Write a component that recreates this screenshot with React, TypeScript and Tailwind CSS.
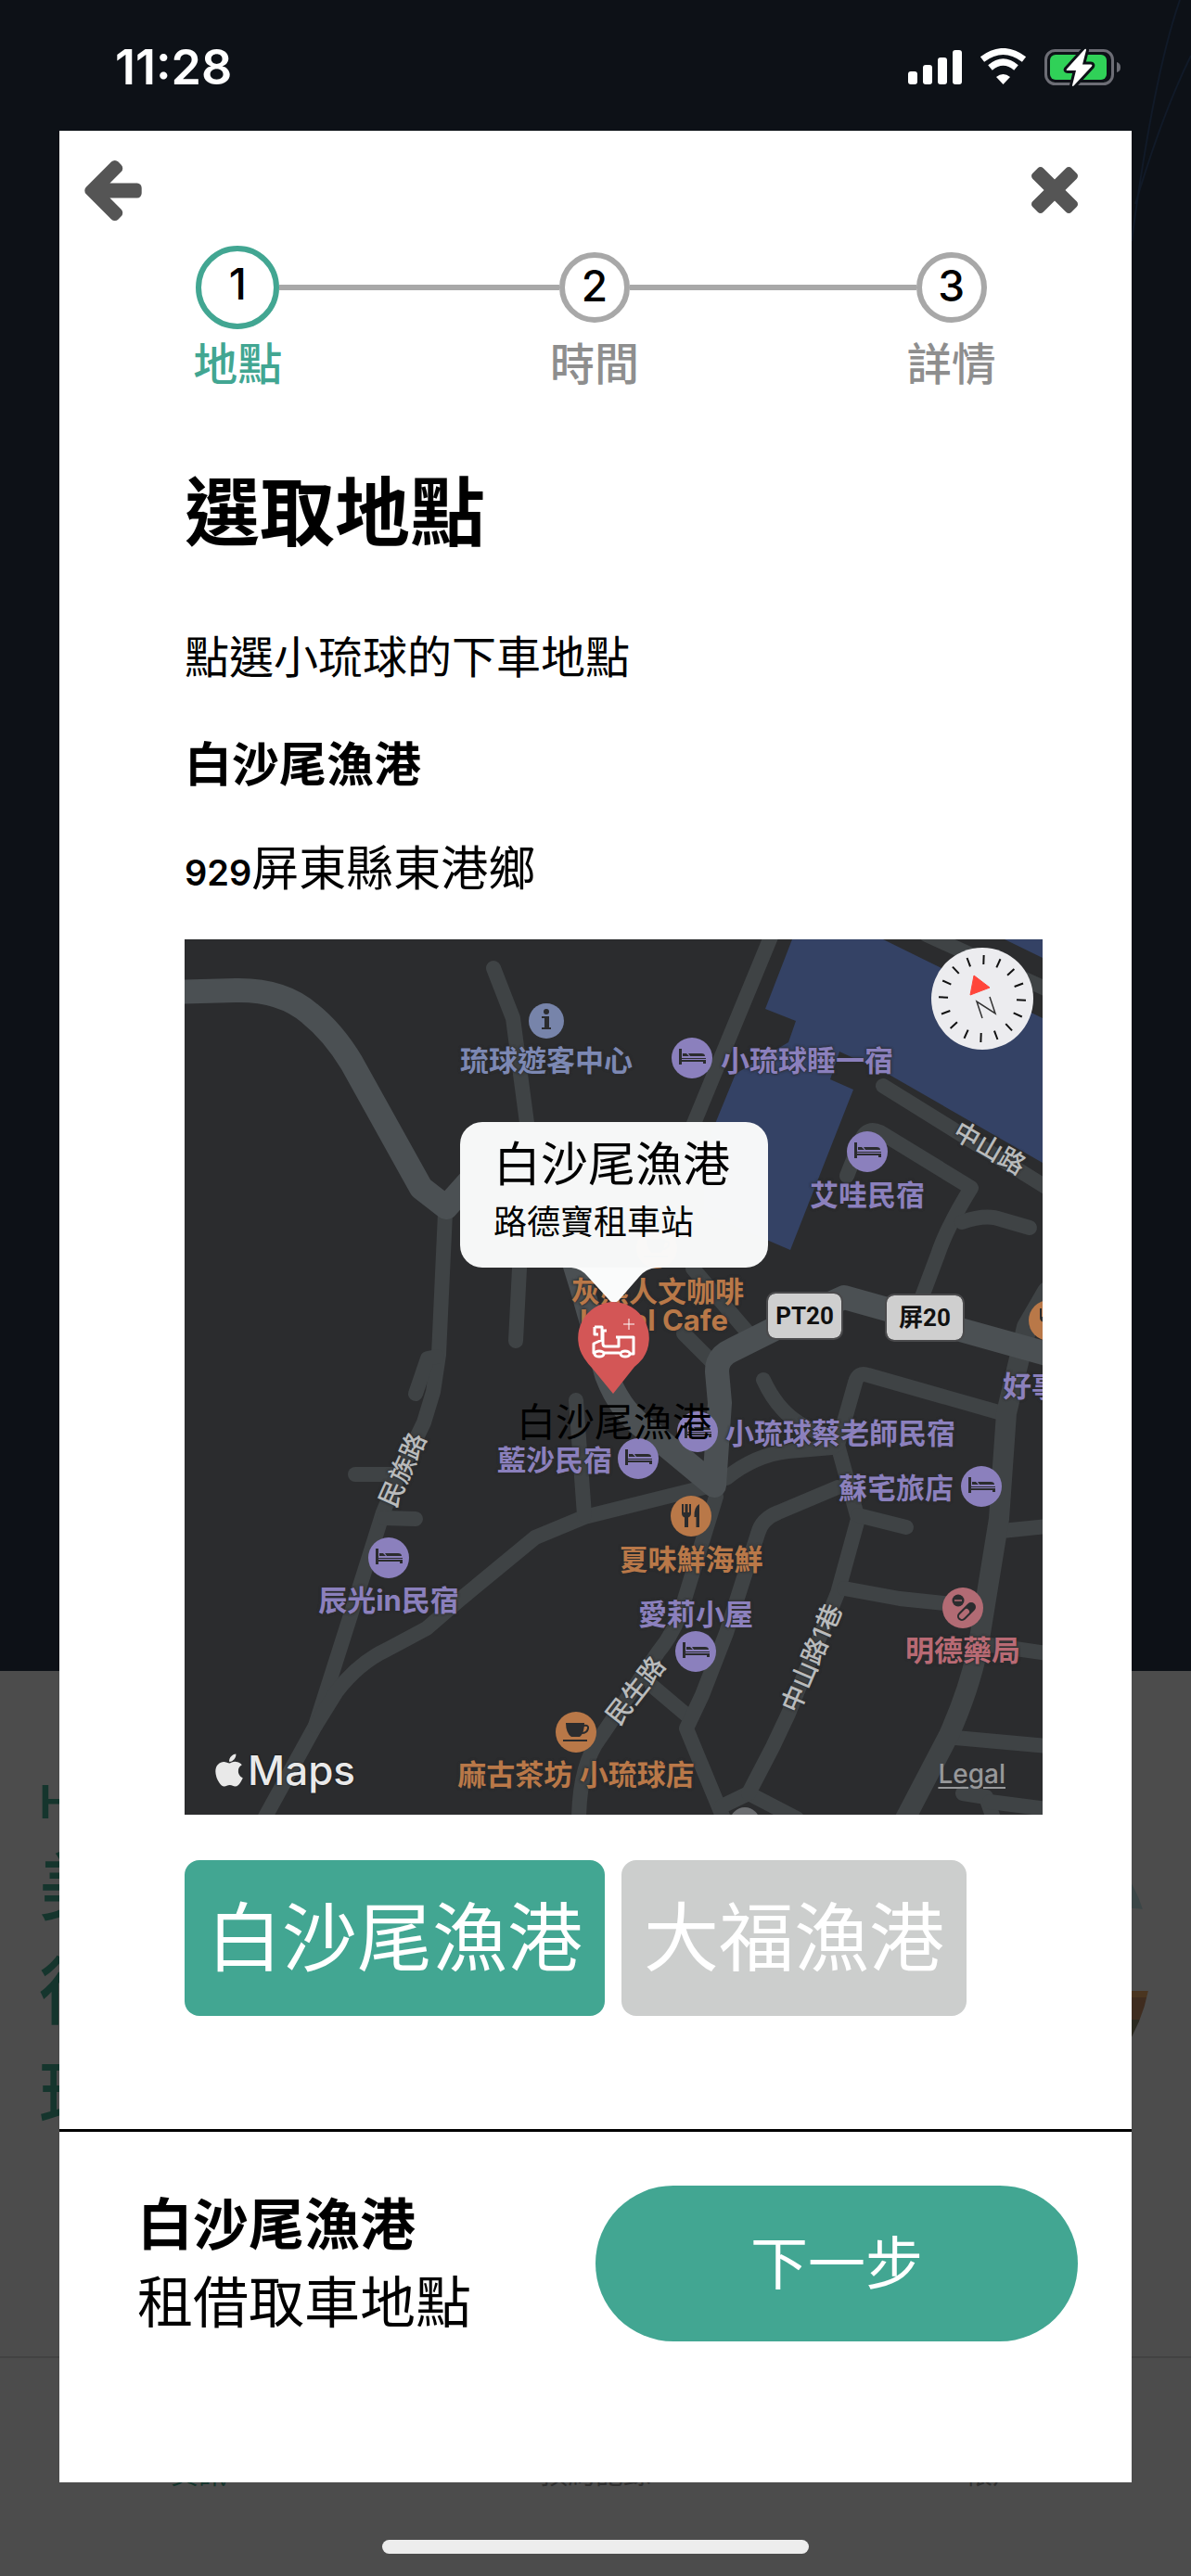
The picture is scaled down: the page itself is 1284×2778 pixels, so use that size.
import React, { FunctionComponent, useState } from 'react'
import { FaApple } from 'react-icons/fa'

type Kind = 'bed' | 'food' | 'cafe' | 'pill' | 'info'

const steps = ['地點', '時間', '詳情']
const ports = ['白沙尾漁港', '大福漁港']

const minorRoads = [
  'M333 31L354 85L369 198L361 355L357 433',
  'M281 295L274 448L268 488L258 521L232 575L214 618L191 691L141 848L86 948',
  'M272 450L262 452L249 490',
  'M184 577H230',
  'M249 625L215 624',
  'M141 848L164 811Q188 780 218 766L261 743L298 711L378 645L431 623L564 590',
  'M422 497L431 621',
  'M425 948Q426 890 448 861L511 768Q530 745 538 715L573 601',
  'M504 805L543 838',
  'M704 591L640 618Q622 625 618 641L584 748L558 815L541 851L581 948',
  'M579 935L608 921L660 948',
  'M608 921L634 871L651 835L704 705L726 625L704 545',
  'M704 545L723 478Q726 466 737 470L881 511',
  'M584 581Q615 556 651 552L698 548',
  'M624 475Q640 510 668 525L698 540',
  'M726 621L778 634',
  'M711 700L771 711L838 718',
  'M881 638L930 633',
  'M868 761L930 770',
  'M831 861L930 870',
  'M839 921L864 925L872 948',
  'M868 930L930 938',
  'M633 -5L548 201',
  'M753 158L930 268',
  'M714 255L730 215Q736 202 750 208L848 268Q822 310 812 340L794 388',
  'M838 305Q864 296 880 302L911 311',
  'M800 -5L930 54',
  'M548 355L608 425',
  'M538 425L568 455',
]

const places: { text: string; className: string }[] = [
  { text: '琉球遊客中心', className: 'left-[390px] top-[131px] text-[#7c88b3]' },
  { text: '小琉球睡一宿', className: 'left-[671px] top-[131px] text-[#8b80bd]' },
  { text: '艾哇民宿', className: 'left-[736px] top-[276px] text-[#8b80bd]' },
  { text: '灰熊人文咖啡', className: 'left-[510px] top-[380px] text-[#b97848]' },
  { text: 'Local Cafe', className: 'left-[506px] top-[411px] text-[#b97848]' },
  { text: '好事', className: 'left-[913px] top-[482px] text-[#8b80bd]' },
  { text: '小琉球蔡老師民宿', className: 'left-[707px] top-[533px] text-[#8b80bd]' },
  { text: '藍沙民宿', className: 'left-[399px] top-[562px] text-[#8b80bd]' },
  { text: '蘇宅旅店', className: 'left-[767px] top-[592px] text-[#8b80bd]' },
  { text: '夏味鮮海鮮', className: 'left-[546px] top-[669px] text-[#b97848]' },
  { text: '愛莉小屋', className: 'left-[551px] top-[728px] text-[#8b80bd]' },
  { text: '明德藥局', className: 'left-[839px] top-[767px] text-[#b96a74]' },
  { text: '辰光in民宿', className: 'left-[220px] top-[713px] text-[#8b80bd]' },
  { text: '麻古茶坊 小琉球店', className: 'left-[422px] top-[901px] text-[#b97848]' },
]

const roadNames: { text: string; className: string }[] = [
  { text: '中山路', className: 'left-[868px] top-[225px] rotate-[30deg]' },
  { text: '民族路', className: 'left-[235px] top-[572px] rotate-[-66deg]' },
  { text: '民生路', className: 'left-[486px] top-[810px] rotate-[-52deg]' },
  { text: '中山路1巷', className: 'left-[676px] top-[775px] rotate-[-67deg]' },
]

const markers: { kind: Kind; x: number; y: number }[] = [
  { kind: 'info', x: 390, y: 88 },
  { kind: 'bed', x: 547, y: 128 },
  { kind: 'bed', x: 736, y: 229 },
  { kind: 'cafe', x: 509, y: 333 },
  { kind: 'food', x: 932, y: 411 },
  { kind: 'bed', x: 553, y: 531 },
  { kind: 'bed', x: 489, y: 560 },
  { kind: 'bed', x: 859, y: 590 },
  { kind: 'food', x: 546, y: 622 },
  { kind: 'bed', x: 551, y: 768 },
  { kind: 'pill', x: 839, y: 721 },
  { kind: 'bed', x: 220, y: 667 },
  { kind: 'cafe', x: 422, y: 855 },
]

const markerFill: Record<Kind, string> = {
  bed: '#8b80bd',
  food: '#b97848',
  cafe: '#b97848',
  pill: '#b26b74',
  info: '#7784aa',
}

const Glyph: FunctionComponent<{ kind: Kind }> = ({ kind }) => {
  if (kind === 'bed') {
    return (
      <g fill="#2b2c2e">
        <path d="M-14 -10h3v10H15V6H12V4H-11V7H-14z" />
        <path d="M-10 -5h4l3 3h-7z M-4 -5H10q4 0 4 3H-2z" />
        <path d="M-11 1.5H15" stroke="#8b80bd" strokeWidth="1" />
      </g>
    )
  }
  if (kind === 'food') {
    return (
      <g fill="#2b2c2e">
        <path d="M-10 -13h2v9h1.500v-9h3v9H-2v-9H0v10q0 3 -3 4.500V12H-7V1.500Q-10 0 -10 -3z" />
        <path d="M9 -13V12H5.500V1H3.500Q3 -10 9 -13z" />
      </g>
    )
  }
  if (kind === 'cafe') {
    return (
      <g fill="#2b2c2e">
        <path d="M-11 -10H9Q9 1 4 5H-5Q-11 1 -11 -10z" />
        <path d="M8 -7q6 -1 5 3q-1 5 -7 5" fill="none" stroke="#2b2c2e" strokeWidth="2" />
        <path d="M-14 8H12v2H-14z" />
      </g>
    )
  }
  if (kind === 'pill') {
    return (
      <g>
        <circle cx="-5" cy="-8" r="6.500" fill="#2b2c2e" />
        <path d="M-9 -8h8" stroke="#b26b74" strokeWidth="1.500" />
        <path d="M-1 9L9 -1" stroke="#2b2c2e" strokeWidth="10" strokeLinecap="round" />
        <path d="M-1 9L4 4" stroke="#b26b74" strokeWidth="6" strokeLinecap="round" />
      </g>
    )
  }
  return (
    <g fill="#2b2c2e">
      <circle cy="-10" r="3" />
      <path d="M-5 -5H3V7H5V9H-5V7H-2V-3H-5z" />
    </g>
  )
}

const Compass = () => {
  const ticks = Array.from({ length: 16 }, (_, i) => i * 22.5 + 2)
  return (
    <g transform="translate(860 64)">
      <circle r="55" fill="#ececef" />
      {ticks.map((angle) => (
        <path key={angle} d="M0 -47V-37" stroke="#111" strokeWidth="2" transform={`rotate(${angle})`} />
      ))}
      <path d="M-9 -25L8 -12L-13 -4z" fill="#ff453a" stroke="#ff453a" strokeWidth="1" strokeLinejoin="round" />
      <path d="M0 21L-6 3L14 16L8 -2" fill="none" stroke="#333" strokeWidth="1.500" />
    </g>
  )
}

const Pin = () => (
  <svg className="absolute left-[423px] top-[390px] h-[102px] w-20" viewBox="0 0 80 102">
    <path d="M39 1A39 39 0 0 1 71 62Q66 68 62 71L39 100L16 72Q12 68 8 62A39 39 0 0 1 39 1z" fill="#d35656" />
    <g fill="none" stroke="#fff" strokeWidth="3" strokeLinejoin="round">
      <path d="M19 28H27V32H32 M19 28V36H23 M27 30V42L18 46V56H20 M28 32V46Q28 49 31 49H45V39 M42 39H61V57H58 M29 56H46" />
      <ellipse cx="24" cy="57" rx="5" ry="3" />
      <ellipse cx="52" cy="57" rx="5" ry="3" />
    </g>
    <path d="M56 19V31 M50 25H62" stroke="#fff" strokeWidth="1" />
  </svg>
)

const PortMap = () => (
  <section className="relative h-[944px] w-full overflow-hidden bg-[#2b2c2e]">
    <svg className="absolute left-0 top-0 h-[944px] w-[925px]" viewBox="0 0 925 944">
      <path
        d="M655 0H753L925 85V241L758 145L706 121L696 151L721 162L653 335L560 295V228L594 145L651 111L659 88L626 75z M884 0H925V20z"
        fill="#344265"
      />
      <g fill="none" stroke="#3f4345" strokeWidth="16" strokeLinecap="round" strokeLinejoin="round">
        {minorRoads.map((road) => (
          <path key={road} d={road} />
        ))}
        <path d="M930 380L908 418L886 511L878 625L858 748Q850 800 824 858L776 950" strokeWidth="22" />
      </g>
      <g fill="none" stroke="#4b5053" strokeWidth="26" strokeLinecap="round" strokeLinejoin="round">
        <path d="M-15 57L55 55Q105 54 135 80Q160 100 180 133L255 268L282 289L330 235" />
        <path d="M405 300L428 375L455 470Q470 510 500 530L571 589L577 500L574 466Q574 450 590 443L640 418L711 386L940 450" />
      </g>
      <circle cx="604" cy="952" r="16" fill="#6b6d70" />
      {markers.map((m) => (
        <g key={`${m.x}-${m.y}`} transform={`translate(${m.x} ${m.y})`}>
          <circle r={m.kind === 'info' ? 19 : 22} fill={markerFill[m.kind]} />
          <Glyph kind={m.kind} />
        </g>
      ))}
      <Compass />
    </svg>

    {places.map((place) => (
      <span
        key={place.text}
        className={`absolute -translate-x-1/2 -translate-y-1/2 whitespace-nowrap text-[31px] leading-7 font-bold [text-shadow:0_0_3px_#2b2c2e,0_0_3px_#2b2c2e] ${place.className}`}
      >
        {place.text}
      </span>
    ))}
    {roadNames.map((road) => (
      <span
        key={road.text}
        className={`absolute -translate-x-1/2 -translate-y-1/2 whitespace-nowrap text-[28px] leading-9 font-medium text-[#b9bbbc] [text-shadow:0_0_3px_#2b2c2e,0_0_3px_#2b2c2e] ${road.className}`}
      >
        {road.text}
      </span>
    ))}

    <span className="absolute left-[629px] top-[382px] flex h-12 w-[79px] items-center justify-center rounded-lg bg-[#cfcfcf] font-[Roboto,'Noto_Sans_CJK_TC',sans-serif] text-[26px] font-bold text-[#111] outline-2 outline-[#4a4a4c]">
      PT20
    </span>
    <span className="absolute left-[757px] top-[384px] flex h-12 w-[82px] items-center justify-center rounded-lg bg-[#cfcfcf] font-[Roboto,'Noto_Sans_CJK_TC',sans-serif] text-[26px] font-bold text-[#111] outline-2 outline-[#4a4a4c]">
      屏20
    </span>

    <div className="absolute left-[297px] top-[197px] h-[157px] w-[332px] rounded-3xl bg-[#fafbfb]/98 px-9 pt-[14px] text-black">
      <p className="text-[51px] leading-16">白沙尾漁港</p>
      <p className="text-4xl leading-[60px]">路德寶租車站</p>
      <svg className="absolute left-[120px] top-[157px] h-[38px] w-[92px]" viewBox="0 0 92 38">
        <path d="M0 0H92Q80 1 73 10L53 33Q46 42 39 33L18 10Q11 1 0 0z" fill="#fafbfb" />
      </svg>
    </div>
    <Pin />
    <span className="absolute left-[463px] top-[521px] -translate-x-1/2 -translate-y-1/2 whitespace-nowrap text-[42px] leading-12 text-black">
      白沙尾漁港
    </span>

    <div className="absolute bottom-5 left-7 flex items-center text-[#e9e9e9] [text-shadow:0_0_2px_#000]">
      <FaApple className="size-10" />
      <span className="text-[44px] leading-14 font-medium">Maps</span>
    </div>
    <a href="#legal" className="absolute bottom-6 right-10 text-[28px] leading-10 font-medium text-[#97989a] underline underline-offset-4">
      Legal
    </a>
  </section>
)

const StatusBar = () => (
  <header className="flex h-[141px] items-center justify-between pt-1 pl-[124px] pr-[76px] text-white">
    <span className="text-[52px] font-semibold">11:28</span>
    <svg className="h-[42px] w-[230px]" viewBox="0 0 230 42">
      <g fill="#fff">
        <rect x="1" y="25" width="10" height="14" rx="3" />
        <rect x="17" y="18" width="10" height="21" rx="3" />
        <rect x="33" y="10" width="10" height="29" rx="3" />
        <rect x="49" y="2" width="10" height="37" rx="3" />
        <path d="M103.500 39L96 31Q103.500 25 111 31z" />
      </g>
      <g fill="none" stroke="#fff" strokeWidth="7">
        <path d="M81 12Q103.500 -5 126 12" />
        <path d="M89.500 21Q103.500 9 117.500 21" />
      </g>
      <rect x="149.500" y="2.500" width="72" height="36" rx="10" fill="none" stroke="#6c6d75" strokeWidth="3" />
      <path d="M226 15q4 1 4 5.500t-4 5.500z" fill="#6c6d75" />
      <rect x="154" y="7" width="61" height="27" rx="6" fill="#30d158" />
      <path
        d="M191.500 1L172 22.500Q171 24 173 24H182L178 40Q178 42 180 40L199 19.500Q200 17.500 198 17.500H189L193 2Q193 0 191.500 1z"
        fill="#fff"
        stroke="#0d1117"
        strokeWidth="6"
        paintOrder="stroke"
      />
    </svg>
  </header>
)

// the home screen that stays visible around the dialog
const Backdrop = () => (
  <div className="flex flex-col overflow-hidden bg-[#4c4c4c] [grid-area:1/1]" aria-hidden="true">
    <div className="flex h-[1802px] justify-end bg-[#0d1117]">
      <svg className="h-[700px] w-20" viewBox="0 0 80 700" fill="none" stroke="#111a28" strokeWidth="2">
        <path d="M68 0Q40 80 16 260M80 60Q50 120 20 220" />
      </svg>
    </div>
    <div className="flex flex-1 items-start justify-between pt-[109px] pl-[42px] text-[#15352d]">
      <div className="font-medium">
        <p className="text-[50px] leading-16 font-semibold">Hello</p>
        <p className="mt-1 text-[80px] leading-28">
          美好<br />
          得來<br />
          琉球
        </p>
      </div>
      <svg className="mt-[30px] h-[346px] w-[389px]" viewBox="0 0 389 346">
        <clipPath id="scene">
          <circle cx="173" cy="173" r="173" />
        </clipPath>
        <g clipPath="url(#scene)">
          <path d="M0 0H346V119Q335 117 310 116H0z" fill="#3b4647" />
          <path d="M0 206H346V213H0z" fill="#4a3520" />
          <path d="M0 213H346V237H0z" fill="#3f2c1f" />
          <path d="M0 237H346V346H0z" fill="#2b2a20" />
        </g>
      </svg>
    </div>
    <div className="grid h-[237px] grid-cols-3 border-t-2 border-[#424242] pt-[106px] text-center text-[30px] leading-9 text-[#303030]">
      <span className="text-[#15352d]">資訊</span>
      <span>預約記錄</span>
      <span>帳戶</span>
    </div>
  </div>
)

const Stepper: FunctionComponent<{ current: number }> = ({ current }) => (
  <ol className="mt-6 mr-0.5 grid grid-cols-3">
    {steps.map((step, i) => (
      <li key={step} className="flex flex-col items-center">
        <div className="flex h-[90px] w-full items-center">
          <span className={`h-[6px] flex-1 ${i === 0 ? 'bg-white' : 'bg-[#a8a8a8]'}`} />
          <span
            className={`flex items-center justify-center rounded-full border-[6px] text-[46px] leading-none font-medium text-black ${
              i === current ? 'size-[90px] border-[#42a692] pb-2' : 'size-[76px] border-[#a8a8a8] pb-1'
            }`}
          >
            {i + 1}
          </span>
          <span className={`h-[6px] flex-1 ${i === steps.length - 1 ? 'bg-white' : 'bg-[#a8a8a8]'}`} />
        </div>
        <span className={`mt-[10px] text-5xl leading-14 font-medium ${i === current ? 'text-[#42a692]' : 'text-[#8e8e8e]'}`}>
          {step}
        </span>
      </li>
    ))}
  </ol>
)

const App: FunctionComponent = () => {
  const [port, setPort] = useState<string>(ports[0])

  return (
    <div className="grid min-h-screen font-[Inter,'Noto_Sans_CJK_TC',sans-serif]" lang="zh-Hant">
      <Backdrop />
      <div className="relative flex flex-col [grid-area:1/1]">
        <StatusBar />
        <main className="mx-16 bg-white text-black">
          <div className="flex h-25 items-center justify-between pt-7 pr-[58px] pl-[27px]">
            <button type="button" aria-label="返回">
              <svg className="h-[65px] w-[62px]" viewBox="64 181 1472 1558" fill="#555">
                <path d="M1536 896v128q0 53-32.500 90.500T1419 1152H715l293 294q38 36 38 90t-38 90l-75 76q-37 37-90 37-52 0-91-37L101 1050q-37-37-37-90 0-52 37-91l651-650q38-38 91-38 52 0 90 38l75 74q38 38 38 91t-38 91L715 768h704q52 0 84.500 37.500T1536 896z" />
              </svg>
            </button>
            <button type="button" aria-label="關閉">
              <svg className="size-[50px]" viewBox="110 366 1188 1188" fill="#555">
                <path d="M1298 1322q0 40-28 68l-136 136q-28 28-68 28t-68-28L704 1232l-294 294q-28 28-68 28t-68-28l-136-136q-28-28-28-68t28-68l294-294-294-294q-28-28-28-68t28-68l136-136q28-28 68-28t68 28l294 294 294-294q28-28 68-28t68 28l136 136q28 28 28 68t-28 68L976 960l294 294q28 28 28 68z" />
              </svg>
            </button>
          </div>
          <Stepper current={0} />

          <div className="pt-21 pr-24 pl-[135px]">
            <h1 className="text-[81px] leading-24 font-bold">選取地點</h1>
            <p className="mt-19 text-5xl leading-16">點選小琉球的下車地點</p>
            <h2 className="mt-13 text-[51px] leading-16 font-bold">{port}</h2>
            <p className="mt-12 mb-11 flex h-16 items-baseline text-[51px] leading-16">
              <span className="text-[38px] font-semibold">929</span>屏東縣東港鄉
            </p>
            <PortMap />
            <div className="mt-[49px] flex gap-[18px]">
              {ports.map((name) => (
                <button
                  key={name}
                  type="button"
                  onClick={() => setPort(name)}
                  className={`h-[168px] rounded-2xl px-6 text-[81px] leading-24 whitespace-nowrap text-white ${
                    name === port ? 'bg-[#42a692]' : 'bg-[#cccecd]'
                  }`}
                >
                  {name}
                </button>
              ))}
            </div>
          </div>

          <div className="mt-[122px] flex justify-between border-t-[3px] border-black pt-[58px] pr-[58px] pb-[152px] pl-[84px]">
            <div className="text-[60px] leading-21">
              <p className="font-bold">{port}</p>
              <p>租借取車地點</p>
            </div>
            <button type="button" className="h-[168px] w-[520px] rounded-full bg-[#42a692] text-[62px] text-white">
              下一步
            </button>
          </div>
        </main>
        <div className="mx-auto mt-[62px] h-[15px] w-[460px] rounded-full bg-[#ededed]" />
      </div>
    </div>
  )
}

export default App
